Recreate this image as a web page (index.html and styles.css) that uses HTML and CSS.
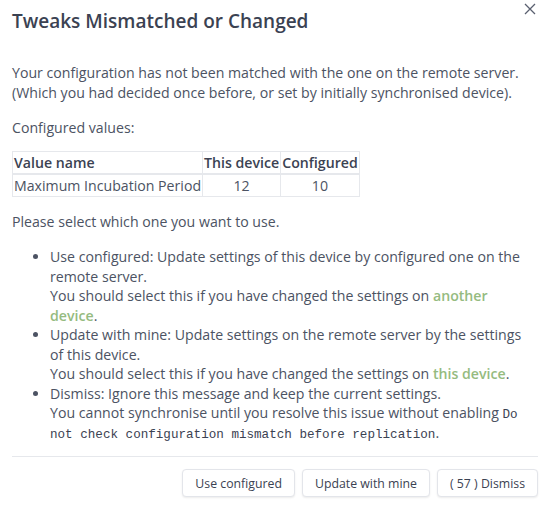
FILE: index.html
```html
<!DOCTYPE html>
<html>
<head>
<meta charset="utf-8">
<link rel="stylesheet" href="styles.css">
</head>
<body>
<div class="modal">
  <button class="close" aria-label="Close">
    <svg width="12" height="12" viewBox="0 0 12 12"><path d="M1 1 L11 11 M11 1 L1 11" stroke="#5a6070" stroke-width="1.3" fill="none"/></svg>
  </button>
  <h1 class="title">Tweaks Mismatched or Changed</h1>
  <div class="content">
    <p>Your configuration has not been matched with the one on the remote server.<br>(Which you had decided once before, or set by initially synchronised device).</p>
    <p class="before-table">Configured values:</p>
    <table class="values">
      <thead>
        <tr><th>Value name</th><th>This device</th><th>Configured</th></tr>
      </thead>
      <tbody>
        <tr><td>Maximum Incubation Period</td><td class="num">12</td><td class="num">10</td></tr>
      </tbody>
    </table>
    <p>Please select which one you want to use.</p>
    <ul class="options">
      <li>Use configured: Update settings of this device by configured one on the remote server.<br>You should select this if you have changed the settings on <span class="hl">another device</span>.</li>
      <li>Update with mine: Update settings on the remote server by the settings of this device.<br>You should select this if you have changed the settings on <span class="hl">this device</span>.</li>
      <li>Dismiss: Ignore this message and keep the current settings.<br>You cannot synchronise until you resolve this issue without enabling <code>Do not check configuration mismatch before replication</code>.</li>
    </ul>
  </div>
  <div class="buttons">
    <button class="btn">Use configured</button>
    <button class="btn">Update with mine</button>
    <button class="btn">( 57 ) Dismiss</button>
  </div>
</div>
</body>
</html>
```
FILE: styles.css
```css
html, body {
  margin: 0;
  padding: 0;
  background: #ffffff;
}
body {
  font-family: "Open Sans", "Noto Sans", sans-serif;
  color: #4c5363;
  font-size: 14.15px;
}
.modal {
  position: relative;
  padding: 8px 9px 16px 12px;
}
.close {
  position: absolute;
  top: 2px;
  right: 10px;
  border: none;
  background: none;
  padding: 0;
  width: 14px;
  height: 14px;
  display: flex;
  align-items: center;
  justify-content: center;
}
.title {
  margin: 0;
  font-size: 19px;
  font-weight: 600;
  color: #3b4252;
  line-height: 26px;
}
.content {
  margin-top: 29px;
  line-height: 19.5px;
}
.content p {
  margin: 0 0 16px 0;
}
.content p.before-table {
  margin-bottom: 13px;
}
.values {
  border-collapse: collapse;
  margin: 0 0 15px 0;
  line-height: 19px;
}
.values th, .values td {
  border: 1px solid #e6e8ec;
  padding: 1px 1px;
}
.values th {
  font-weight: 600;
  text-align: left;
  color: #3b4252;
}
.values td.num {
  text-align: center;
}
.values thead tr {
  border-bottom: 2px solid #e6e8ec;
}
.options {
  margin: 0;
  padding: 0 4px 0 38px;
}
.options li {
  margin: 0;
}
.hl {
  color: #95bb80;
  font-weight: 600;
}
code {
  font-family: "Liberation Mono", monospace;
  font-size: 12.6px;
  line-height: 1;
  color: #3b4252;
}
.buttons {
  margin-top: 14px;
  border-top: 1px solid #e6e8ec;
  padding-top: 12px;
  display: flex;
  justify-content: flex-end;
  gap: 7px;
}
.btn {
  font-family: inherit;
  font-size: 12.3px;
  color: #3b4252;
  background: #ffffff;
  border: 1px solid #e3e5ea;
  border-radius: 4px;
  box-shadow: 0 1px 2px rgba(0,0,0,0.08);
  height: 28px;
  padding: 0 12px;
}
```
